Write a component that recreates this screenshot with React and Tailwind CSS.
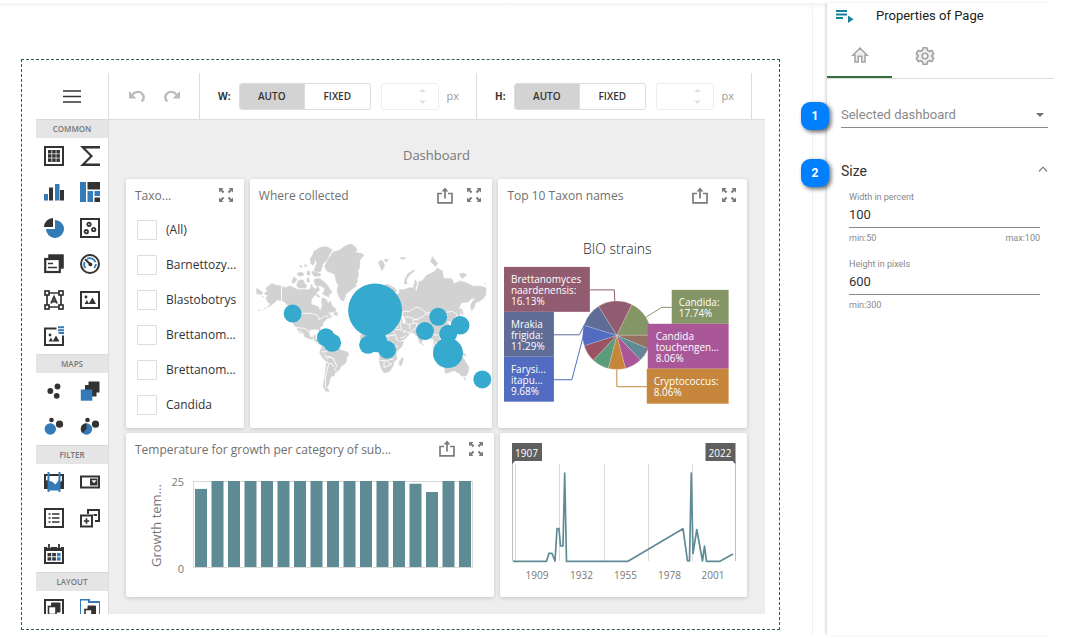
import React from 'react';

const INK = '#333333';
const BLUE = '#337ab7';

/* ---------- toolbox icons ---------- */

function Icon({ children }) {
  return (
    <svg viewBox="0 0 20 20" className="block h-5 w-5" fill="none" aria-hidden="true">
      {children}
    </svg>
  );
}

const frame = <rect x="1" y="1" width="18" height="18" stroke={INK} strokeWidth="2" />;

const icons = {
  grid: (
    <Icon>
      {frame}
      {[4, 8.2, 12.4].map((y) => [4, 8.2, 12.4].map((x) => <rect key={`${x}-${y}`} x={x} y={y} width="3.5" height="3.5" fill={INK} />))}
    </Icon>
  ),
  pivot: (
    <Icon>
      <path d="M0 0H20V2.500H5.500L13 10L5.500 17.500H20V20H0L10 10Z" fill={INK} />
    </Icon>
  ),
  chart: (
    <Icon>
      <path d="M0 12H4V18.5H0ZM11 2H15.5V18.5H11Z" fill={BLUE} />
      <path d="M5 5.5H9V18.5H5ZM16 8H20V18.5H16Z" fill={INK} />
    </Icon>
  ),
  treemap: (
    <Icon>
      <path d="M0 0H6V20H0ZM7.5 9H13V20H7.5ZM14.5 9H20V14H14.5Z" fill={BLUE} />
      <path d="M7.5 0H20V7.5H7.5ZM14.5 15.5H20V20H14.5Z" fill={INK} />
    </Icon>
  ),
  pie: (
    <Icon>
      <path d="M11 2A9 9 0 1 1 2 11H11Z" fill={BLUE} />
      <path d="M9 0V9H0A9 9 0 0 1 9 0Z" fill={INK} />
    </Icon>
  ),
  scatter: (
    <Icon>
      {frame}
      <g stroke={INK} strokeWidth="1.8">
        <circle cx="9" cy="6.3" r="1.7" />
        <circle cx="13.7" cy="11.5" r="1.7" />
        <circle cx="6.3" cy="13.7" r="1.7" />
      </g>
    </Icon>
  ),
  cards: (
    <Icon>
      <path d="M5 1H19V14H17V5H5Z" fill={INK} stroke={INK} strokeWidth="1.6" strokeLinejoin="round" />
      <rect x="1.2" y="5" width="14.6" height="13" stroke={INK} strokeWidth="2.2" fill="#fff" />
      <path d="M4 9.5H9M4 13.5H13" stroke={INK} strokeWidth="1.6" />
    </Icon>
  ),
  gauge: (
    <Icon>
      <circle cx="10" cy="10" r="9" stroke={INK} strokeWidth="2" />
      <path d="M5.5 14A6 6 0 0 1 4.5 8M7 4.9A6 6 0 0 1 15.6 8.2M15.9 10A6 6 0 0 1 14.3 14" stroke={BLUE} strokeWidth="1.8" />
      <path d="M5 5.2L10.6 10.4" stroke={INK} strokeWidth="2" />
      <circle cx="10.4" cy="10.4" r="1.9" fill={INK} />
    </Icon>
  ),
  text: (
    <Icon>
      <path d="M3 3V17H17V3Z" stroke={INK} strokeWidth="1.7" />
      {[[1, 1], [15, 1], [1, 15], [15, 15]].map(([x, y]) => (
        <rect key={`${x}-${y}`} x={x} y={y} width="4" height="4" fill="#fff" stroke={INK} strokeWidth="1.7" />
      ))}
      <path d="M7 13.5L10 6.8L13 13.5M8 11.5H12" stroke={INK} strokeWidth="1.8" />
    </Icon>
  ),
  image: (
    <Icon>
      <rect x="1" y="2" width="18" height="16" stroke={INK} strokeWidth="2" />
      <circle cx="6" cy="7" r="1.4" fill={INK} />
      <path d="M4.5 14L7 10L9 14ZM8.5 14L12.5 7.5L16 14Z" fill={INK} />
    </Icon>
  ),
  boundImage: (
    <Icon>
      <path d="M12.5 2.5H1V19H19V9.5" stroke={INK} strokeWidth="2" />
      <circle cx="6" cy="9" r="1.4" fill={INK} />
      <path d="M4.5 15.5L7 11.5L9 15.5ZM8.5 15.5L12 9.5L15.5 15.5Z" fill={INK} />
      <path d="M14 1.2H21M14 4.2H21M14.5 7H20.5" stroke={BLUE} strokeWidth="1.9" />
    </Icon>
  ),
  points: (
    <Icon>
      <g fill={INK}>
        <circle cx="13.5" cy="5.5" r="2.9" />
        <circle cx="6.3" cy="10" r="2.9" />
        <circle cx="12.7" cy="14.8" r="2.9" />
      </g>
    </Icon>
  ),
  layers: (
    <Icon>
      <rect x="8.5" y="0.5" width="11" height="11" rx=".5" fill={INK} />
      <rect x="5" y="4" width="11.5" height="11.500" rx=".5" fill={INK} />
      <rect x="0.8" y="8.5" width="11.500" height="11.200" fill={BLUE} />
    </Icon>
  ),
  bubbles: (
    <Icon>
      <circle cx="7.5" cy="3" r="2.3" fill={INK} />
      <circle cx="15.5" cy="7.2" r="3.6" fill={INK} />
      <circle cx="6.3" cy="12" r="5.7" fill={BLUE} />
    </Icon>
  ),
  pieMap: (
    <Icon>
      <circle cx="7.5" cy="3" r="2.3" fill={INK} />
      <circle cx="15.5" cy="7.2" r="3.6" fill={INK} />
      <circle cx="6.5" cy="12" r="5.7" fill={BLUE} />
      <path d="M6.5 6.3V12L2.5 16A5.7 5.7 0 0 1 6.5 6.3Z" fill={INK} />
    </Icon>
  ),
  range: (
    <Icon>
      <path d="M1 3V16H19V3Z" stroke={INK} strokeWidth="2" />
      <path d="M0 10L5 7V17H0ZM15 11L20 7V17H15Z" fill={INK} />
      <path d="M4.5 9L8 9.5L11.5 12.5L15.5 7V18.5H4.5Z" fill={BLUE} />
      <path d="M4.5 0V20M15.5 0V20" stroke={BLUE} strokeWidth="2" />
    </Icon>
  ),
  combo: (
    <Icon>
      <rect x="1" y="4.5" width="18" height="11" stroke={INK} strokeWidth="2" />
      <rect x="10" y="6.500" width="7.5" height="7" fill={INK} />
      <path d="M11.5 8.3H16.5L14 11.3Z" fill="#fff" />
    </Icon>
  ),
  list: (
    <Icon>
      {frame}
      <path d="M4.5 6H6.5M8 6H15.5M4.5 10H6.5M8 10H15.5M4.5 14H6.5M8 14H15.5" stroke={INK} strokeWidth="1.6" />
    </Icon>
  ),
  tree: (
    <Icon>
      <path d="M8 6V2H19V13H15M13.5 7H17" stroke={INK} strokeWidth="2" />
      <rect x="1" y="7.5" width="11" height="11" stroke={INK} strokeWidth="2" />
      <path d="M3.8 13H9.2M6.5 10.3V15.7" stroke={INK} strokeWidth="1.7" />
    </Icon>
  ),
  calendar: (
    <Icon>
      <rect x="1" y="4" width="18" height="15" stroke={INK} strokeWidth="2" />
      <path d="M1 3H19V7H1Z" fill={INK} />
      <path d="M5 0V4M15 0V4" stroke="#fff" strokeWidth="3.5" />
      <path d="M5 0V4M15 0V4" stroke={INK} strokeWidth="1.8" />
      {[9, 13.3].map((y) => (
        <g key={y}>
          <rect x="3.5" y={y} width="3.7" height="3.3" fill={INK} />
          <rect x="8.2" y={y} width="3.7" height="3.3" fill={INK} />
          <rect x="12.9" y={y} width="3.7" height="3.3" fill={BLUE} />
        </g>
      ))}
    </Icon>
  ),
  group: (
    <Icon>
      {frame}
      <rect x="7" y="3.5" width="9.5" height="10" rx="1" fill={INK} />
      <rect x="4.5" y="7.5" width="7.500" height="8" fill="#fff" stroke={INK} strokeWidth="1.6" />
    </Icon>
  ),
  tabs: (
    <Icon>
      <path d="M0 20V0.500H9V3H20V20" stroke={BLUE} strokeWidth="2" />
      <rect x="7.5" y="6.5" width="8.500" height="9" rx="1" fill={INK} />
      <rect x="5" y="10.500" width="7" height="7" fill="#fff" stroke={INK} strokeWidth="1.6" />
    </Icon>
  ),
};

const toolbox = [
  {
    title: 'COMMON',
    items: [
      ['grid', 'Grid'], ['pivot', 'Pivot'], ['chart', 'Chart'], ['treemap', 'Treemap'],
      ['pie', 'Pies'], ['scatter', 'Scatter chart'], ['cards', 'Cards'], ['gauge', 'Gauges'],
      ['text', 'Text box'], ['image', 'Image'], ['boundImage', 'Bound image'],
    ],
  },
  { title: 'MAPS', items: [['points', 'Geo points'], ['layers', 'Choropleth'], ['bubbles', 'Bubble map'], ['pieMap', 'Pie map']] },
  { title: 'FILTER', items: [['range', 'Range filter'], ['combo', 'Combo box'], ['list', 'List box'], ['tree', 'Tree view'], ['calendar', 'Date filter']] },
  { title: 'LAYOUT', items: [['group', 'Group'], ['tabs', 'Tab container']], clipped: true },
];

function Toolbox() {
  return (
    <nav aria-label="Toolbox" className="w-[73px] shrink-0 border-r border-[#dddddd]">
      <button type="button" aria-label="Menu" className="flex h-[46px] w-full items-center justify-center">
        <svg viewBox="0 0 18 13" className="h-[13px] w-[18px]" aria-hidden="true">
          <path d="M0 1H18M0 6.5H18M0 12H18" stroke={INK} strokeWidth="1.6" />
        </svg>
      </button>
      {toolbox.map((section) => (
        <section key={section.title}>
          <h2 className="h-[19px] border-t border-[#d8d8d8] bg-[#e5e5e5] text-center text-[8px] leading-[18px] font-semibold text-[#777777]">
            {section.title}
          </h2>
          <div className={section.clipped ? 'grid h-[23px] grid-cols-2 overflow-hidden' : 'grid grid-cols-2'}>
            {section.items.map(([name, label]) => (
              <button key={name} type="button" aria-label={label} className="flex h-9 items-center justify-center">
                {icons[name]}
              </button>
            ))}
          </div>
        </section>
      ))}
    </nav>
  );
}

/* ---------- toolbar ---------- */

function SizeGroup({ id, label }) {
  return (
    <div className="flex items-center border-r border-[#dddddd] pr-[17px] pl-[18px]">
      <label htmlFor={id} className="pr-2 text-[10px] font-bold text-[#333333]">{label}</label>
      <div className="flex h-[27px] w-[132px] overflow-hidden rounded-[3px] border border-[#dddddd] text-[10px] font-semibold text-[#333333]">
        <button type="button" aria-pressed="true" className="flex-1 bg-[#d3d3d3]">AUTO</button>
        <button type="button" aria-pressed="false" className="flex-1 border-l border-[#dddddd]">FIXED</button>
      </div>
      <div className="relative ml-[10px] h-[27px] w-[58px]">
        <input
          id={id}
          type="number"
          className="h-full w-full appearance-none rounded-[3px] border border-[#eeeeee] bg-white px-2 text-xs [&::-webkit-inner-spin-button]:appearance-none"
        />
        <svg viewBox="0 0 7 16" className="pointer-events-none absolute top-[5px] right-[13px] h-4 w-[7px]" fill="#e2e2e2" aria-hidden="true">
          <path d="M0 4L3.5 0.5L7 4ZM0 12.5H7L3.5 16Z" />
        </svg>
      </div>
      <span className="ml-2 text-[11px] text-[#999999]">px</span>
    </div>
  );
}

function Toolbar() {
  return (
    <div className="flex h-[47px] border-b border-[#dddddd] bg-white">
      <div className="flex w-[91px] items-center border-r border-[#dddddd] px-[10px]">
        <button type="button" aria-label="Undo" className="flex w-9 justify-center">
          <svg viewBox="0 0 18 14" className="h-[14px] w-[18px]" fill="none" aria-hidden="true">
            <path d="M4.500 5.500C7 2.300 11.500 2 14 4.500C16.300 7 16 10 13.800 12.500" stroke="#bbbbbb" strokeWidth="2.400" />
            <path d="M1 2V9.500H8.500Z" fill="#bbbbbb" />
          </svg>
        </button>
        <button type="button" aria-label="Redo" className="flex w-9 justify-center">
          <svg viewBox="0 0 18 14" className="h-[14px] w-[18px]" fill="none" aria-hidden="true">
            <path d="M13.500 5.500C11 2.300 6.500 2 4 4.500C1.700 7 2 10 4.200 12.500" stroke="#bbbbbb" strokeWidth="2.400" />
            <path d="M17 2V9.500H9.500Z" fill="#bbbbbb" />
          </svg>
        </button>
      </div>
      <SizeGroup id="surface-width" label="W:" />
      <SizeGroup id="surface-height" label="H:" />
    </div>
  );
}

/* ---------- cards ---------- */

function ExportButton() {
  return (
    <button type="button" aria-label="Export">
      <svg viewBox="0 0 16 17" className="h-[17px] w-4" fill="none" stroke="#7c7c7c" aria-hidden="true">
        <path d="M5 6.500H1V15.800H15V6.500H11" strokeWidth="1.700" />
        <path d="M8 11.500V2" strokeWidth="1.700" />
        <path d="M4.600 4.500L8 0.500L11.400 4.500Z" fill="#7c7c7c" stroke="none" />
      </svg>
    </button>
  );
}

function ExpandButton() {
  return (
    <button type="button" aria-label="Maximize">
      <svg viewBox="0 0 14 14" className="h-[14px] w-[14px]" aria-hidden="true">
        <path
          d="M0 0H4.500L3 1.500L5.300 3.800L3.800 5.300L1.500 3L0 4.500ZM14 0V4.500L12.500 3L10.200 5.300L8.700 3.800L11 1.500L9.500 0ZM0 14V9.500L1.500 11L3.800 8.700L5.300 10.200L3 12.500L4.500 14ZM14 14H9.500L11 12.500L8.700 10.200L10.200 8.700L12.500 11L14 9.500Z"
          fill="#7c7c7c"
        />
      </svg>
    </button>
  );
}

function Card({ title, exportable, className, children }) {
  return (
    <article className={`min-w-0 rounded-[2px] bg-white shadow-[0_1px_4px_rgba(0,0,0,0.18)] ${className}`}>
      {title && (
        <header className="flex h-8 items-center gap-[14px] pr-[11px] pl-[9px]">
          <h3 className="min-w-0 flex-1 pt-[2px] text-xs whitespace-nowrap text-[#707070]">{title}</h3>
          {exportable && <ExportButton />}
          <ExpandButton />
        </header>
      )}
      {children}
    </article>
  );
}

const taxa = ['(All)', 'Barnettozy...', 'Blastobotrys', 'Brettanom...', 'Brettanom...', 'Candida'];

function TaxonList() {
  return (
    <ul className="pt-px pl-[11px]">
      {taxa.map((name, i) => (
        <li key={i}>
          <label className="flex h-[35px] items-center gap-[9px] text-xs whitespace-nowrap text-[#333333]">
            <input type="checkbox" className="h-5 w-5 shrink-0 appearance-none rounded-[1px] border border-[#dddddd]" />
            {name}
          </label>
        </li>
      ))}
    </ul>
  );
}

/* ---------- world map: outlines as [longitude, latitude] ---------- */

const land = [
  // North America
  '-168,65.6 -163,67 -166,68.3 -163,69.5 -156,71.3 -150,70.5 -141,69.7 -135,69 -128,70 -124,69.4 -115,68 -108,68 -101,67.8 -96,68.2 -94,71 -91.5,69.5 -88,68 -85,69.5 -82,69 -82,67 -86,66.5 -87,64.5 -90,63.8 -94,61 -94.5,59 -92.5,57 -88,56.5 -82.3,55.1 -82.2,53 -79.5,51.3 -79,54 -77,56 -78.5,58.8 -77.5,60.5 -78,62.4 -73.5,62.3 -70,61 -69,59 -66,58.8 -64.5,60.3 -62,57 -60,55 -57,54.5 -55.7,52.5 -59,50.2 -66,50.2 -70,47 -65,49 -65,46 -61,46 -66,43.6 -70,43.6 -70.5,41.8 -74,40.5 -76,37 -76,35 -81,32 -80,27 -80.5,25.2 -82.5,28 -84,30 -89.5,30 -94,29.5 -97.3,27.5 -97.7,22.5 -95,18.5 -91,18.7 -90.3,21 -87,21.5 -88.3,18 -88,15.8 -83.3,15 -83.7,11 -81,9 -77.5,8.5 -80,7.3 -83,8.3 -86,11 -88,13 -94,16 -97,15.8 -105.5,20 -105.5,22.5 -109,26 -112.5,30 -114.8,31.5 -112,27 -109.5,23 -112,25 -115,28 -117,32.5 -121,35 -124,40 -124,46.5 -123,49 -128,52 -131,55 -135,58.5 -140,59.8 -147,61 -152,59 -154,58 -160,55.5 -164,54.6 -158,58 -162,59 -165,61.5 -165,63 -161,64.5 -166,64.5',
  // Chukotka tip beyond the date line, St. Lawrence, Aleutians
  '-180,68.8 -175,67.3 -170,66 -173,64.500 -178,65.500 -180,65', '-171.500,63.500 -169,63.300 -170,63', '-169,53.300 -166,54.200 -167,53.200', '-178,52 -174,52.300 -176,51.700',
  // Greenland
  '-73,78.3 -68,80.2 -60,82 -50,82.4 -42,83.2 -32,83.6 -25,83.1 -22,82.3 -27,82 -14,81.6 -12,81.2 -18,80 -18,78 -21,76.5 -20,75 -22,73.5 -22,72 -25,70.5 -23,70 -30,68.2 -37,66 -40,65 -42,62 -43.5,60 -48,61 -51,63.5 -53.5,66.5 -53,69 -51,70 -54,71.5 -56,73.5 -58,75.5 -66,76.2 -70,76.7',
  // Ellesmere and Axel Heiberg
  '-90,76.5 -80,76.2 -78,77.5 -76,79 -70,80 -65,81.6 -61,82.5 -70,83.1 -80,83 -90,82.2 -93,81 -87,80.2 -86,79 -88,78',
  '-96,80.5 -92,81.2 -88,80 -91,78.5 -95,79',
  // Devon, Baffin, Victoria, Banks and smaller arctic islands
  '-93,76.5 -89,76.3 -80,75.6 -80,74.7 -90,74.6 -93,75.7',
  '-90,73 -85,73.7 -80,73.5 -77,72.6 -72,71.5 -68,70 -66,68.5 -62,66.7 -64,65 -67,65.8 -66,63 -72,64 -77,65.4 -73,67.5 -73,68.5 -79,70 -86,70 -89,71',
  '-117,71 -114,72.8 -107,73 -105,71.5 -101,70 -103,68.7 -113,68.8 -117,69.8',
  '-125,72 -122,74.3 -117,73.4 -119,72 -123,71.2',
  '-117,75.5 -112,76.2 -106,75.8 -107,74.9 -113,74.6',
  '-101,73.8 -98,73.8 -97,72 -101,72',
  '-101,76.5 -97,76.6 -96,75 -101,75.2',
  '-113,78.4 -109,78.5 -110,77.7',
  '-105,78.8 -100,78.5 -104,78',
  '-87,65.5 -82,64 -80,63.5 -84,63',
  '-59,47.7 -56,51.5 -53,49 -53,46.8 -56,47',
  // Caribbean
  '-85,22 -81,23.1 -74.5,20.2 -77.5,20 -82,22.2',
  '-74,19.7 -68.5,18.5 -72,18',
  // Iceland, Svalbard, Great Britain, Ireland
  '-24,65.5 -21,66.3 -15,66.2 -14,65 -19,63.4 -22.5,64',
  '11,79.5 16,80 18,79.7 21,78.5 17,76.7 14,78', '20,80.3 27,80.2 23,79.4',
  '-5,58.5 -2,57.5 1.5,52.7 1,51 -5,50 -3,53.5 -5,56', '-10,52 -6,52.2 -6,55 -9,54.5',
  // Eurasia
  '-9,43 -9,37 -5.5,36 0,39 3.2,42 7,43.5 10,44 12.5,41.5 16,38 16.5,40 12.5,44 14,45.5 19,42 21,37 24,38 23,40.5 26,41 27,37 36,36.5 35,31.5 32.5,31 35,28 39,21.5 43,13 45,12.8 52,15.6 59.5,22.5 56.5,26.3 51.5,24.5 48,30 51,28.5 57,27 61.5,25.2 67,25 70,21 73,20 74,14 77.5,8 80,13 80.5,16 87,21.5 91,22.5 94.5,16 97.5,16.5 98.5,10 101,3 103.5,1.5 103,5 100,9 101,13 105,9 109,12 106,18.5 108,21.5 114,22.3 120,26 122,31 119,35 122,37 118,39 122,40.5 125,39.5 126.5,35 129,35.5 128,39 132,43 136,44 140,48.5 141,53 136,54.5 137,54 142,59 152,59.2 156,61.7 163,62.5 160,60.5 156,57 157,51.5 162,55 163,58.5 170,60 177,62.5 180,65 180,69 171,70 160,69.8 150,71.5 140,72.5 130,71.2 126,73.5 113,73.7 112,76.5 104,77.7 98,76.2 87,75 80,72.6 75,72.2 73,70 71,66.5 69,68.5 72,71.5 69,73 66,69 60,69 55,68.4 48,67.7 44,68.3 44,66 40,64.5 36,64 34,66.8 41,66.7 36,69 30,70 25,71 18,69.5 13,66 5,62 5.5,59 8,58 11,59 13,55.5 16.5,57 17,61 22,65.7 25,65 21.5,61 28,60.3 23,59 21,55 14,54 10,54 10.5,57.5 8,57 8.5,54 4,52 -1,49.5 -4.5,48.4 -1,46 -2,43.5',
  // Novaya Zemlya, Severnaya Zemlya, New Siberian Islands
  '51.5,71 53,73.5 58,75.8 67,77 68,76.6 60,75.2 55.5,73 56,71', '93,79.5 96,81 100,80 104,79.2 101,78 97,79', '138,75.5 144,75.9 150,75.2 143,73.5',
  '45,80.6 52,80.8 54,80.6 50,80.2', '179,71.500 180,71.200 178,70.900',
  '142,54 144,50 143,46.5 142,49',
  // Japan
  '141,45.5 145,43.5 140,42 142,39 140.5,35.5 136,34 131,31.3 130,33.5 136,36 139.5,38.5',
  // Africa
  '-6,35.8 -1,35.5 10,37.2 11,33.5 19,30.3 20,32.5 29,31 32.5,31 34,27 37,21.5 39,15.5 43,11.5 51,12 48,4.5 41,-2.5 39,-7 40.5,-15 35,-20 35,-24 32.5,-28 28,-33 20,-34.8 18,-32.5 15,-27 12,-17.5 13.5,-11 12,-5.5 9,-1 9.5,4 5,4.5 -2,5 -8,4.5 -13,8.5 -17,14.7 -17,21 -13,27.5 -9.5,31',
  // Madagascar, Sri Lanka
  '49.5,-12.5 50.2,-16 47,-25 44,-24 44,-18', '80,9.5 81.8,7 80.2,6.2',
  // South America
  '-77,8.5 -72,12 -62,10.7 -57,6 -51.5,4.5 -50,0 -44,-2.5 -38,-4 -35,-7 -38.5,-13 -39.5,-19 -42,-23 -48,-26 -49,-29 -53,-33.5 -58,-34.5 -57,-38 -62,-39 -65,-42 -65.5,-46 -69,-50.5 -68.5,-52.5 -65.5,-54.8 -71,-55 -75,-51 -75,-46.5 -73,-40 -71.5,-30 -70.3,-19 -76,-14 -81,-6 -80,-1 -77.5,3',
  // South-east Asia and Oceania
  '95.5,5.5 104,-2 106,-6 102,-4.5', '105.5,-6.5 114,-7.5 114,-8.5 106,-7.5',
  '109,1.5 117,7 118.5,2 116,-4 110,-3', '120,-3 121,1 125,1.2 121,-1 122,-5', '120.5,18.5 122,18 124,12.5 126,7 123,8 120.5,14',
  '131,-1 138,-2 146,-6.5 150,-10.5 143,-8.5 138,-8',
  '114,-22 122,-18 126,-14 130,-12 132,-11.5 137,-12.3 136,-15 140.5,-17.5 142,-11 145.5,-15 149,-21 153,-26 153,-30.5 150,-37.5 146.5,-39 143.5,-38.8 140.5,-38 138,-34.5 135.5,-34.8 131,-31.5 124,-33.5 118,-35 115,-34 115.5,-31',
  '145,-41 148,-41 147,-43.5', '173,-35 178.5,-38 175,-41.5', '173,-41 171,-44 167,-46.5 171,-46',
];

const borders = [
  '-141,69.7 -141,60 -136,59 -131,55.5', '-123,49 -95,49 -88,48 -83,46 -82,42 -75,45 -70,46.5 -67,45', '-117,32.5 -111,31.3 -106,31.5 -101,29 -97.5,26',
  '-92,17.5 -90,14', '-85,11 -83,10', '-79,-4 -70,-4 -70,2 -67,1 -60,5 -52,2', '-70,-11 -60,-14 -57,-20 -54,-26 -58,-30 -53,-33', '-70,-18 -67,-23 -70,-33 -72,-42 -72,-51 -68,-52', '-67,-22 -62,-22 -58,-27', '-74,-8 -69,-15 -65,-11 -58,-16',
  '28,69 30,62 28,57 32,52 40,49 38,47', '48,46 50,51 60,51 70,55 77,54 87,49 80,45 70,42 60,45 53,45', '87,49 98,51 110,50 117,50 127,51 135,48 131,43', '87,49 95,44 105,42 115,45 120,47',
  '74,38 78,33 90,28 97,28 98,22 103,22 106,22', '60,36 66,38 72,37 70,32 66,29 61,26', '45,41 48,38 45,36 48,30', '55,37 60,36 61,30', '37,36 42,37 42,33 36,32', '36,30 44,29 48,29', '45,17 52,19 55,22', '66,38 66,42 74,42',
  '25,31 25,20 37,22', '24,20 24,10 34,10 36,5 42,4', '13,23 15,15 15,8 25,5 30,4', '9,30 10,24 0,20 -9,27', '-5,20 -12,15 -8,10 3,12 14,13', '12,-6 22,-6 24,-12 30,-10 31,-4 38,-4', '12,-17 25,-18 30,-16 35,-15', '20,-18 20,-28 26,-25 32,-23', '25,-18 29,-22 32,-22',
];

const project = (pairs) =>
  pairs.split(' ').map((pair) => {
    const [lon, lat] = pair.split(',').map(Number);
    const x = 121.5 + lon * 0.638;
    const y = 138.5 - 36.6 * Math.log(Math.tan(Math.PI / 4 + (lat * Math.PI) / 360));
    return `${x.toFixed(1)},${y.toFixed(1)}`;
  }).join(' ');

const bubbles = [
  [125.3, 99.5, 27], [42.7, 102.7, 9], [76, 126.5, 9], [82.3, 132, 9], [118.3, 134, 9], [127, 131, 10.5], [137.3, 139, 9],
  [175.3, 120.3, 9], [188.5, 106, 9], [210.5, 114.5, 9.3], [198.5, 123, 9], [198.3, 142.3, 15], [232.7, 168.7, 9],
];

function WorldMap() {
  return (
    <svg viewBox="0 0 243 217" className="block h-auto w-full" role="img" aria-label="Where collected">
      <g fill="#d2d2d2" stroke="#d2d2d2" strokeWidth="0.5" strokeLinejoin="round">
        {land.map((shape) => <polygon key={shape} points={project(shape)} />)}
      </g>
      <g fill="#ffffff">
        <polygon points={project('47,46 51,46.5 53,42 54,37.5 50,37.5 49,41')} />
        <polygon points={project('28,43.5 31,46 37,46.5 41,42 35,42 30,41.2')} />
      </g>
      <g fill="none" stroke="#ffffff" strokeWidth="0.9" strokeLinejoin="round">
        {borders.map((line) => <polyline key={line} points={project(line)} />)}
      </g>
      <g fill="#36a9cf">
        {bubbles.map(([x, y, r]) => <circle key={`${x}-${y}`} cx={x} cy={y} r={r} />)}
      </g>
    </svg>
  );
}

/* ---------- pie ---------- */

const slices = [
  [17.74, '#859666'], [6.45, '#947063'], [6.45, '#5f8b95'], [8.06, '#aa5799'], [8.06, '#c6873d'],
  [8.06, '#5b9c7d'], [8.06, '#9b5262'], [9.68, '#516cc0'], [11.29, '#5e6c96'], [16.13, '#925c70'],
];

function slicePaths() {
  let angle = 26;
  const point = (deg) => {
    const rad = (deg * Math.PI) / 180;
    return `${(119 + 34.3 * Math.sin(rad)).toFixed(2)} ${(124.5 - 34.3 * Math.cos(rad)).toFixed(2)}`;
  };
  return slices.map(([share, color]) => {
    const start = angle;
    angle += share * 3.6;
    return { color, d: `M119 124.5L${point(start)}A34.3 34.3 0 0 1 ${point(angle)}Z` };
  });
}

const callouts = [
  { x: 6, y: 56, w: 86, h: 45, tx: 7, color: '#925c70', lines: ['Brettanomyces', 'naardenensis:', '16.13%'] },
  { x: 6, y: 101, w: 50, h: 45, tx: 7, color: '#5e6c96', lines: ['Mrakia', 'frigida:', '11.29%'] },
  { x: 6, y: 146, w: 50, h: 45, tx: 7, color: '#516cc0', lines: ['Farysi...', 'itapu...', '9.68%'] },
  { x: 174, y: 79, w: 57, h: 34, tx: 7, color: '#859666', lines: ['Candida:', '17.74%'] },
  { x: 150, y: 113, w: 81, h: 45, tx: 8, color: '#aa5799', lines: ['Candida', 'touchengen...', '8.06%'] },
  { x: 149, y: 158, w: 82, h: 35, tx: 7, color: '#c6873d', lines: ['Cryptococcus:', '8.06%'] },
];

function TaxonPie() {
  return (
    <svg viewBox="0 0 249 217" className="block h-auto w-full" role="img" aria-label="BIO strains">
      <text x="119.5" y="43" textAnchor="middle" fontSize="14" fontWeight="300" fill="#222222">BIO strains</text>
      <g stroke="#ffffff" strokeOpacity="0.35" strokeWidth="0.5">
        {slicePaths().map((slice) => <path key={slice.d} d={slice.d} fill={slice.color} />)}
      </g>
      <g fill="none" strokeWidth="1">
        <path d="M92 79H116.5L117 90.5" stroke="#925c70" />
        <path d="M56 124H81.5L87 113" stroke="#5e6c96" />
        <path d="M56 169H74L86 123" stroke="#516cc0" />
        <path d="M174 96.5H164L148 106.5" stroke="#859666" />
        <path d="M150 137L141 146" stroke="#aa5799" />
        <path d="M149 176H119V159" stroke="#c6873d" />
      </g>
      {callouts.map((c) => (
        <g key={c.lines.join()}>
          <rect x={c.x} y={c.y} width={c.w} height={c.h} fill={c.color} />
          <text fontSize="10" fontWeight="500" fill="#ffffff">
            {c.lines.map((line, i) => <tspan key={line} x={c.x + c.tx} y={c.y + 16 + i * 11}>{line}</tspan>)}
          </text>
        </g>
      ))}
    </svg>
  );
}

/* ---------- bars ---------- */

const temperatures = [22.7, 25, 25, 25, 25, 25, 25, 25, 25, 25, 25, 25, 25, 24.2, 21.8, 25, 25];

function GrowthChart() {
  return (
    <svg viewBox="0 0 368 132" className="block h-auto w-full" role="img" aria-label="Growth temperature">
      <rect x="67.5" y="16.5" width="279" height="86" fill="none" stroke="#d9d9d9" />
      {temperatures.map((value, i) => {
        const height = value * 3.44;
        return <rect key={i} x={69 + i * 16.5} y={102 - height} width="12" height={height} fill="#5f8b95" />;
      })}
      <g fontSize="11" fill="#777777" textAnchor="end">
        <text x="58" y="21">25</text>
        <text x="58" y="108">0</text>
      </g>
      <text transform="translate(35 102) rotate(-90)" fontSize="13" fill="#777777">Growth tem...</text>
    </svg>
  );
}

/* ---------- range selector ---------- */

function YearRange() {
  return (
    <svg viewBox="0 0 247 164" className="block h-auto w-full" role="img" aria-label="Years 1907 to 2022">
      <path d="M15.5 31V128M59.5 31V128M104.5 31V128M148.5 31V128M192.5 31V128" stroke="#d9d9d9" />
      <path d="M12.5 28V128M235.5 28V128" stroke="#bfbfbf" />
      <path
        d="M13 128.3H46.5L49 120.3H52L55 128L57 95.7H59L60.5 113H63L64.7 40L66.5 128.3H128L183 95.7L187.5 128H189.5L191.3 40L193 120.5L196.8 96.5L202.5 128L204.5 113L206.5 128.3H220L233 121"
        fill="none" stroke="#5f8b95" strokeWidth="1.7" strokeLinejoin="round"
      />
      <g fill="#5f5f5f">
        <path d="M12 10H42V28H15L12 31Z" />
        <path d="M205.500 10H235.500V31L232.500 28H205.500Z" />
      </g>
      <g fontSize="10" textAnchor="middle">
        <g fill="#ffffff" fontWeight="500">
          <text x="26.5" y="24">1907</text>
          <text x="220" y="24">2022</text>
        </g>
        <g fill="#777777">
          {[['1909', 37], ['1932', 81.5], ['1955', 125.5], ['1978', 169.5], ['2001', 213]].map(([year, x]) => (
            <text key={year} x={x} y="146">{year}</text>
          ))}
        </g>
      </g>
    </svg>
  );
}

function Designer() {
  return (
    <div className="border border-dashed border-[#2f5d3f] px-[14px] pt-[13px] pb-[15px]">
      <div className="flex font-['Open_Sans','Noto_Sans',sans-serif]">
        <Toolbox />
        <div className="flex min-w-0 flex-1 flex-col bg-[#eeeeee]">
          <Toolbar />
          <div className="pr-[18px] pl-[17px]">
            <h1 className="pt-[25px] pb-[14px] text-center text-[13px] leading-5 text-[#777777]">Dashboard</h1>
            <div className="flex gap-[6px]">
              <Card title="Taxo..." className="flex-[118_1_0%]"><TaxonList /></Card>
              <Card title="Where collected" exportable className="flex-[243_1_0%]"><WorldMap /></Card>
              <Card title="Top 10 Taxon names" exportable className="flex-[249_1_0%]"><TaxonPie /></Card>
            </div>
            <div className="mt-[5px] flex gap-[6px]">
              <Card title="Temperature for growth per category of sub..." exportable className="flex-[368_1_0%]"><GrowthChart /></Card>
              <Card className="flex-[247_1_0%]"><YearRange /></Card>
            </div>
          </div>
        </div>
      </div>
    </div>
  );
}

/* ---------- properties panel ---------- */

function Badge({ children }) {
  return (
    <span className="absolute top-0 -left-[26px] flex h-7 w-7 items-center justify-center rounded-[9px] bg-[#0080ff] text-xs font-bold text-white shadow-[2px_2px_4px_rgba(0,0,0,0.6)]">
      {children}
    </span>
  );
}

function NumberField({ id, label, value, min, max }) {
  return (
    <div className="h-[67px]">
      <label htmlFor={id} className="block text-[9px] leading-3 text-[#888888]">{label}</label>
      <input id={id} type="text" inputMode="numeric" defaultValue={value} className="block h-[25px] w-full border-b border-[#8a8a8a] pb-px text-[13px] text-[#333333] outline-none" />
      <div className="flex justify-between pt-1 text-[9px] leading-3 text-[#888888]">
        <span>{min}</span>
        <span>{max}</span>
      </div>
    </div>
  );
}

function Properties() {
  return (
    <aside className="w-[227px] shrink-0 bg-white shadow-[-2px_0_3px_-1px_rgba(0,0,0,0.2)]">
      <header className="flex h-[31px] items-center gap-[22px] pb-[6px] pl-[9px]">
        <svg viewBox="0 0 18 15" className="mt-[2px] h-[15px] w-[18px]" aria-hidden="true">
          <path d="M0 2H11M0 5.5H11M0 9H7" stroke="#17819c" strokeWidth="1.8" />
          <path d="M12 6.5L17.5 10.2L12 14Z" fill="#17819c" />
        </svg>
        <h2 className="text-[13px] leading-6 text-[#222222]">Properties of Page</h2>
      </header>
      <div role="tablist" className="flex h-[45px] border-b border-[#dddddd]">
        <button type="button" role="tab" aria-selected="true" aria-label="General" className="flex h-[44px] w-[65px] items-center justify-center border-b-2 border-[#35703f]">
          <svg viewBox="0 0 18 18" className="h-[18px] w-[18px]" fill="#eeeeee" stroke="#a3a3a3" strokeWidth="1.5" aria-hidden="true">
            <path d="M1.8 9.3L9 2L16.2 9.3H14V16H10.8V10.3H7.2V16H4V9.3Z" />
          </svg>
        </button>
        <button type="button" role="tab" aria-selected="false" aria-label="Settings" className="flex h-[44px] w-[65px] items-center justify-center">
          <svg viewBox="0 0 24 24" className="h-[22px] w-[22px]" fill="#eeeeee" stroke="#a3a3a3" strokeWidth="1.8" strokeLinejoin="round" aria-hidden="true">
            <path d="M9.9 3H14.1L14.7 5.7L16.8 6.9L19.4 6L21.5 9.6L19.5 11.5V12.5L21.5 14.4L19.4 18L16.8 17.1L14.7 18.3L14.1 21H9.9L9.3 18.3L7.2 17.1L4.6 18L2.5 14.4L4.5 12.5V11.5L2.5 9.6L4.6 6L7.2 6.9L9.3 5.7Z" />
            <circle cx="12" cy="12" r="3" fill="#ffffff" />
          </svg>
        </button>
      </div>

      <div className="relative mt-[23px] pr-[6px] pl-[14px]">
        <Badge>1</Badge>
        <select aria-label="Selected dashboard" defaultValue="" className="block h-[26px] w-full appearance-none rounded-none border-b border-[#8a8a8a] bg-transparent text-[13px] text-[#8a8a8a] outline-none">
          <option value="">Selected dashboard</option>
        </select>
        <svg viewBox="0 0 8 4" className="pointer-events-none absolute top-[11px] right-[10px] h-1 w-2" aria-hidden="true">
          <path d="M0 0H8L4 4Z" fill="#757575" />
        </svg>
      </div>

      <section className="relative mt-[31px] pr-[6px] pl-[14px]">
        <Badge>2</Badge>
        <button type="button" aria-expanded="true" className="flex h-[24px] w-full items-center justify-between text-sm text-[#333333]">
          Size
          <svg viewBox="0 0 10 6" className="mb-[5px] h-[6px] w-[10px]" fill="none" aria-hidden="true">
            <path d="M1 5.3L5 1.2L9 5.3" stroke="#666666" strokeWidth="1.1" />
          </svg>
        </button>
        <div className="pt-[8px] pr-2 pl-2">
          <NumberField id="width-percent" label="Width in percent" value="100" min="min:50" max="max:100" />
          <NumberField id="height-pixels" label="Height in pixels" value="600" min="min:300" />
        </div>
      </section>
    </aside>
  );
}

export default function App() {
  return (
    <div className="min-h-screen bg-white pt-[3px] pr-[17px] font-['Roboto',sans-serif]">
      <div className="flex min-h-[632px] bg-linear-to-b from-[#f4f4f4] from-0% to-white to-1%">
        <main className="mr-[14px] min-w-0 flex-1 rounded-tr-md border-r border-[#f0f0f0] pt-14 pr-8 pl-[21px]">
          <Designer />
        </main>
        <Properties />
      </div>
    </div>
  );
}
